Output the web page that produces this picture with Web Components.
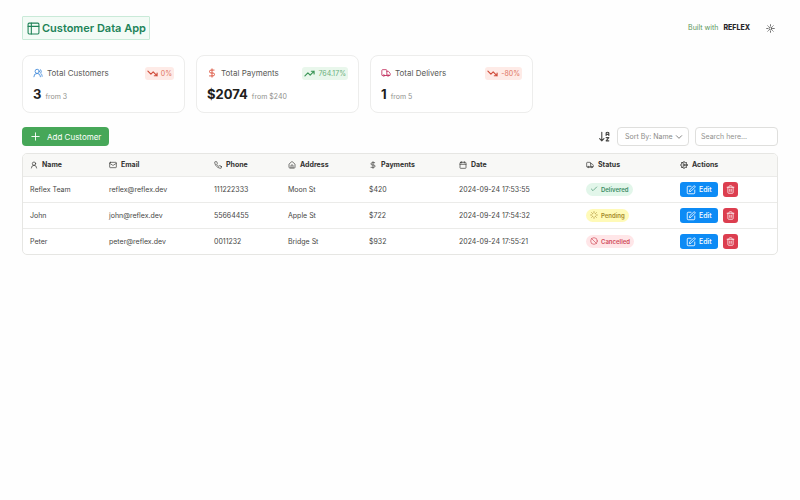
<!DOCTYPE html>
<html lang="en">
<head>
<meta charset="utf-8">
<title>Customer Data App</title>
<style>
  body { margin: 0; background: #fefefe; color: #464644; font-family: Inter, "Liberation Sans", sans-serif; font-size: 7px; line-height: 10px; }
</style>
</head>
<body>
<customer-app></customer-app>
<script>
const ICONS = {
  sheet: '<rect width="20" height="20" x="2" y="2" rx="2"/><path d="M2 8h20M8 2v20"/>',
  users: '<path d="M18 21a8 8 0 0 0-16 0"/><circle cx="10" cy="8" r="5"/><path d="M22 20c0-3.370-2-6.500-4-8a5 5 0 0 0-.450-8.300"/>',
  dollar: '<path d="M12 2v20M17 5H9.500a3.500 3.500 0 0 0 0 7h5a3.500 3.500 0 0 1 0 7H6"/>',
  truck: '<path d="M14 18V6a2 2 0 0 0-2-2H4a2 2 0 0 0-2 2v11a1 1 0 0 0 1 1h2M15 18H9M19 18h2a1 1 0 0 0 1-1v-3.650a1 1 0 0 0-.220-.624l-3.480-4.350A1 1 0 0 0 17.520 8H14"/><circle cx="17" cy="18" r="2"/><circle cx="7" cy="18" r="2"/>',
  down: '<path d="m22 17-8.500-8.500-5 5L2 7M16 17h6v-6"/>',
  up: '<path d="m22 7-8.500 8.500-5-5L2 17M16 7h6v6"/>',
  sun: '<circle cx="12" cy="12" r="4"/><path d="M12 2v2M12 20v2M4.930 4.930l1.410 1.410M17.660 17.660l1.410 1.410M2 12h2M20 12h2M6.340 17.660l-1.410 1.410M19.070 4.930l-1.410 1.410"/>',
  plus: '<path d="M4 12h16M12 4v16"/>',
  sort: '<path d="m3 16 4 4 4-4M7 20V4M20 8h-5M15 10V6.500a2.500 2.500 0 0 1 5 0V10M15 14h5l-5 6h5"/>',
  chevron: '<path d="m4 8 8 8 8-8"/>',
  user: '<path d="M20 21a8 8 0 0 0-16 0"/><circle cx="12" cy="8" r="5"/>',
  mail: '<rect width="20" height="16" x="2" y="4" rx="2"/><path d="m22 7-8.970 5.700a1.940 1.940 0 0 1-2.060 0L2 7"/>',
  phone: '<path d="M22 16.920v3a2 2 0 0 1-2.180 2 19.790 19.790 0 0 1-8.630-3.070 19.500 19.500 0 0 1-6-6 19.790 19.790 0 0 1-3.070-8.670A2 2 0 0 1 4.110 2h3a2 2 0 0 1 2 1.720 12.840 12.840 0 0 0 .700 2.810 2 2 0 0 1-.450 2.110L8.090 9.910a16 16 0 0 0 6 6l1.270-1.270a2 2 0 0 1 2.110-.450 12.840 12.840 0 0 0 2.810.700A2 2 0 0 1 22 16.920z"/>',
  home: '<path d="M15 21v-8a1 1 0 0 0-1-1h-4a1 1 0 0 0-1 1v8"/><path d="M3 10a2 2 0 0 1 .709-1.528l7-5.999a2 2 0 0 1 2.582 0l7 5.999A2 2 0 0 1 21 10v9a2 2 0 0 1-2 2H5a2 2 0 0 1-2-2z"/>',
  calendar: '<path d="M8 2v4M16 2v4"/><rect width="18" height="18" x="3" y="4" rx="2"/><path d="M3 10h18"/>',
  cog: '<circle cx="12" cy="12" r="9"/><circle cx="12" cy="12" r="3"/><path d="M15 12h6M10.500 9.400 7.500 4.200M10.500 14.600l-3 5.200M12 1v2M12 21v2M1 12h2M21 12h2M19.800 4.200l-1.400 1.400M19.800 19.800l-1.400-1.400M4.200 4.200l1.400 1.400M4.200 19.800l1.400-1.400"/>',
  check: '<path d="M20 6 9 17l-5-5"/>',
  loader: '<path d="M12 2v4M16.200 7.800l2.900-2.900M18 12h4M16.200 16.200l2.900 2.900M12 18v4M4.900 19.100l2.900-2.900M2 12h4M4.900 4.900l2.900 2.900"/>',
  ban: '<circle cx="12" cy="12" r="10"/><path d="m4.900 4.900 14.200 14.200"/>',
  edit: '<path d="M12 3H5a2 2 0 0 0-2 2v14a2 2 0 0 0 2 2h14a2 2 0 0 0 2-2v-7"/><path d="M18.375 2.625a2.121 2.121 0 1 1 3 3L12 15l-4 1 1-4Z"/>',
  trash: '<path d="M3 6h18M19 6v14a2 2 0 0 1-2 2H7a2 2 0 0 1-2-2V6M8 6V4a2 2 0 0 1 2-2h4a2 2 0 0 1 2 2v2M10 11v6M14 11v6"/>'
};

class BaseElement extends HTMLElement {
  render(html) {
    this.attachShadow({ mode: 'open' }).innerHTML = html;
  }
}

customElements.define('line-icon', class extends BaseElement {
  connectedCallback() {
    if (this.shadowRoot) return;
    this.render(`<style>
      :host { display: inline-flex; flex: none; width: var(--size, 8px); height: var(--size, 8px); }
      svg { width: 100%; height: 100%; fill: none; stroke: currentColor; stroke-width: var(--stroke, 2); stroke-linecap: round; stroke-linejoin: round; }
    </style><svg viewBox="0 0 24 24" aria-hidden="true">${ICONS[this.getAttribute('name')]}</svg>`);
  }
});

customElements.define('app-header', class extends BaseElement {
  connectedCallback() {
    this.render(`<style>
      :host { display: flex; align-items: center; justify-content: space-between; }
      h1 { display: flex; align-items: center; gap: 2px; margin: 0; padding: 4px 3px 4px 4px; border: 1px solid #c9ead8; border-radius: 1px;
        background: #f3fbf6; color: #208358; font-size: 11px; line-height: 14px; font-weight: 600; }
      h1 line-icon { --size: 13px; }
      nav { display: flex; align-items: center; }
      a { display: flex; gap: 5px; color: #5a965a; text-decoration: none; }
      b { color: #27272a; font-weight: 800; }
      button { display: flex; border: 0; padding: 3px; margin-left: 13px; background: none; color: #333; }
      button line-icon { --size: 9px; }
    </style>
    <h1><line-icon name="sheet"></line-icon>Customer Data App</h1>
    <nav><a href="#reflex">Built with <b>REFLEX</b></a><button type="button" aria-label="Toggle theme"><line-icon name="sun"></line-icon></button></nav>`);
  }
});

customElements.define('stat-card', class extends BaseElement {
  connectedCallback() {
    const a = n => this.getAttribute(n);
    this.render(`<style>
      :host { display: block; box-sizing: border-box; padding: 10px 10px 9px; border: 1px solid #ededec; border-radius: 8px; background: #fff; }
      .top { display: flex; align-items: center; gap: 4px; font-size: 8px; line-height: 14px; color: #5a5a57; }
      .top > line-icon { --size: 10px; color: var(--tone); }
      .trend { display: flex; align-items: center; gap: 3px; margin-left: auto; padding: 1px 2px; border-radius: 3px; font-size: 7px; line-height: 9px; }
      .trend line-icon { --size: 11px; --stroke: 2.5; }
      .down { background: #feebe7; color: #e0745f; }
      .down line-icon { color: #cf4a38; }
      .up { background: #e9f7ec; color: #6ab07c; }
      .up line-icon { color: #3a9455; }
      .value { display: flex; align-items: baseline; gap: 4px; margin-top: 5px; color: #90908c; }
      strong { color: #21201c; font-size: 13px; line-height: 18px; font-weight: 700; }
    </style>
    <div class="top"><line-icon name="${a('icon')}"></line-icon><slot></slot>
      <span class="trend ${a('trend')}"><line-icon name="${a('trend')}"></line-icon>${a('change')}</span></div>
    <div class="value"><strong>${a('value')}</strong><span>from ${a('previous')}</span></div>`);
  }
});

customElements.define('table-toolbar', class extends BaseElement {
  connectedCallback() {
    this.render(`<style>
      :host { display: flex; align-items: center; gap: 6px; }
      button, select, input { box-sizing: border-box; font: inherit; height: 19px; border-radius: 4px; }
      button { display: flex; align-items: center; gap: 6px; margin-right: auto; padding: 0 8px; border: 0; background: #46a758; color: #fff; font-size: 8px; }
      button line-icon { --size: 11px; }
      .sort { --size: 13px; }
      .pick { display: grid; align-items: center; }
      select, .pick line-icon { grid-area: 1 / 1; }
      select { appearance: none; padding: 0 15px 0 7px; border: 1px solid #dfdfdd; background: #fff; color: #8b8b88; }
      .pick line-icon { justify-self: end; margin-right: 6px; pointer-events: none; }
      input { width: 83px; padding: 0 5px; border: 1px solid #dfdfdd; background: #fff; color: #3c3c3a; }
      input::placeholder { color: #92928f; opacity: 1; }
    </style>
    <button type="button"><line-icon name="plus"></line-icon>Add Customer</button>
    <line-icon class="sort" name="sort"></line-icon>
    <label class="pick"><select aria-label="Sort by"><option>Sort By: Name</option></select><line-icon name="chevron"></line-icon></label>
    <input type="search" aria-label="Search customers" placeholder="Search here...">`);
  }
});

customElements.define('status-badge', class extends BaseElement {
  connectedCallback() {
    const kind = this.getAttribute('kind');
    const icon = { delivered: 'check', pending: 'loader', cancelled: 'ban' }[kind];
    this.render(`<style>
      :host { display: inline-flex; align-items: center; gap: 3px; padding: 2px 4px; border-radius: 8px; font-size: 6px; line-height: 9px; font-weight: 600; }
      :host([kind=delivered]) { background: #e2f6ea; color: #3c8c66; }
      :host([kind=pending]) { background: #fffab8; color: #a58a2c; }
      :host([kind=cancelled]) { background: #ffe6e8; color: #d04a58; }
    </style><line-icon name="${icon}"></line-icon><slot></slot>`);
  }
});

customElements.define('row-actions', class extends BaseElement {
  connectedCallback() {
    this.render(`<style>
      :host { display: flex; gap: 5px; }
      button { display: flex; align-items: center; gap: 3px; height: 15px; padding: 0 6px; border: 0; border-radius: 3px; background: #0d8bf5; color: #fff; font: 500 7px/10px Inter, sans-serif; }
      button line-icon { --size: 10px; }
      .delete { padding: 0 3px; background: #dc3e4f; }
      .delete line-icon { --size: 9px; }
    </style>
    <button type="button"><line-icon name="edit"></line-icon>Edit</button>
    <button type="button" class="delete" aria-label="Delete"><line-icon name="trash"></line-icon></button>`);
  }
});

customElements.define('customer-table', class extends BaseElement {
  connectedCallback() {
    const heads = [['user','Name',79],['mail','Email',105],['phone','Phone',74],['home','Address',81],['dollar','Payments',90],['calendar','Date',127],['truck','Status',94],['cog','Actions',104]];
    const total = heads.reduce((sum, h) => sum + h[2], 0);
    const rows = [
      ['Reflex Team','reflex@reflex.dev','111222333','Moon St','$420','2024-09-24 17:53:55','Delivered'],
      ['John','john@reflex.dev','55664455','Apple St','$722','2024-09-24 17:54:32','Pending'],
      ['Peter','peter@reflex.dev','0011232','Bridge St','$932','2024-09-24 17:55:21','Cancelled']
    ];
    this.render(`<style>
      :host { display: block; border: 1px solid #e6e6e3; border-radius: 5px; overflow: hidden; background: #fff; }
      table { width: 100%; table-layout: fixed; border-collapse: collapse; text-align: left; }
      th, td { padding: 0 7px; border-bottom: 1px solid #ebebe9; white-space: nowrap; font-weight: 400; }
      thead th { height: 22px; background: #f8f8f6; color: #333331; font-weight: 700; }
      thead div { display: flex; align-items: center; gap: 4px; }
      tbody tr > * { height: 25px; }
      tbody tr:last-child > * { border-bottom: 0; }
    </style>
    <table>
      <colgroup>${heads.map(h => `<col style="width:${h[2] / total * 100}%">`).join('')}</colgroup>
      <thead><tr>${heads.map(h => `<th scope="col"><div><line-icon name="${h[0]}"></line-icon>${h[1]}</div></th>`).join('')}</tr></thead>
      <tbody>${rows.map(r => `<tr><th scope="row">${r[0]}</th>${r.slice(1, 6).map(c => `<td>${c}</td>`).join('')}<td><status-badge kind="${r[6].toLowerCase()}">${r[6]}</status-badge></td><td><row-actions></row-actions></td></tr>`).join('')}</tbody>
    </table>`);
  }
});

customElements.define('customer-app', class extends BaseElement {
  connectedCallback() {
    this.render(`<style>
      :host { display: block; padding: 16px 22px; }
      .stats { display: grid; width: 67.6%; grid-template-columns: repeat(auto-fit, minmax(150px, 1fr)); gap: 11px; margin: 15px 0 14px; }
      customer-table { margin-top: 7px; }
    </style>
    <app-header></app-header>
    <section class="stats">
      <stat-card icon="users" style="--tone:#3a86d8" trend="down" change="0%" value="3" previous="3">Total Customers</stat-card>
      <stat-card icon="dollar" style="--tone:#d8452e" trend="up" change="764.17%" value="$2074" previous="$240">Total Payments</stat-card>
      <stat-card icon="truck" style="--tone:#c02c5c" trend="down" change="-80%" value="1" previous="5">Total Delivers</stat-card>
    </section>
    <table-toolbar></table-toolbar>
    <customer-table></customer-table>`);
  }
});
</script>
</body>
</html>
